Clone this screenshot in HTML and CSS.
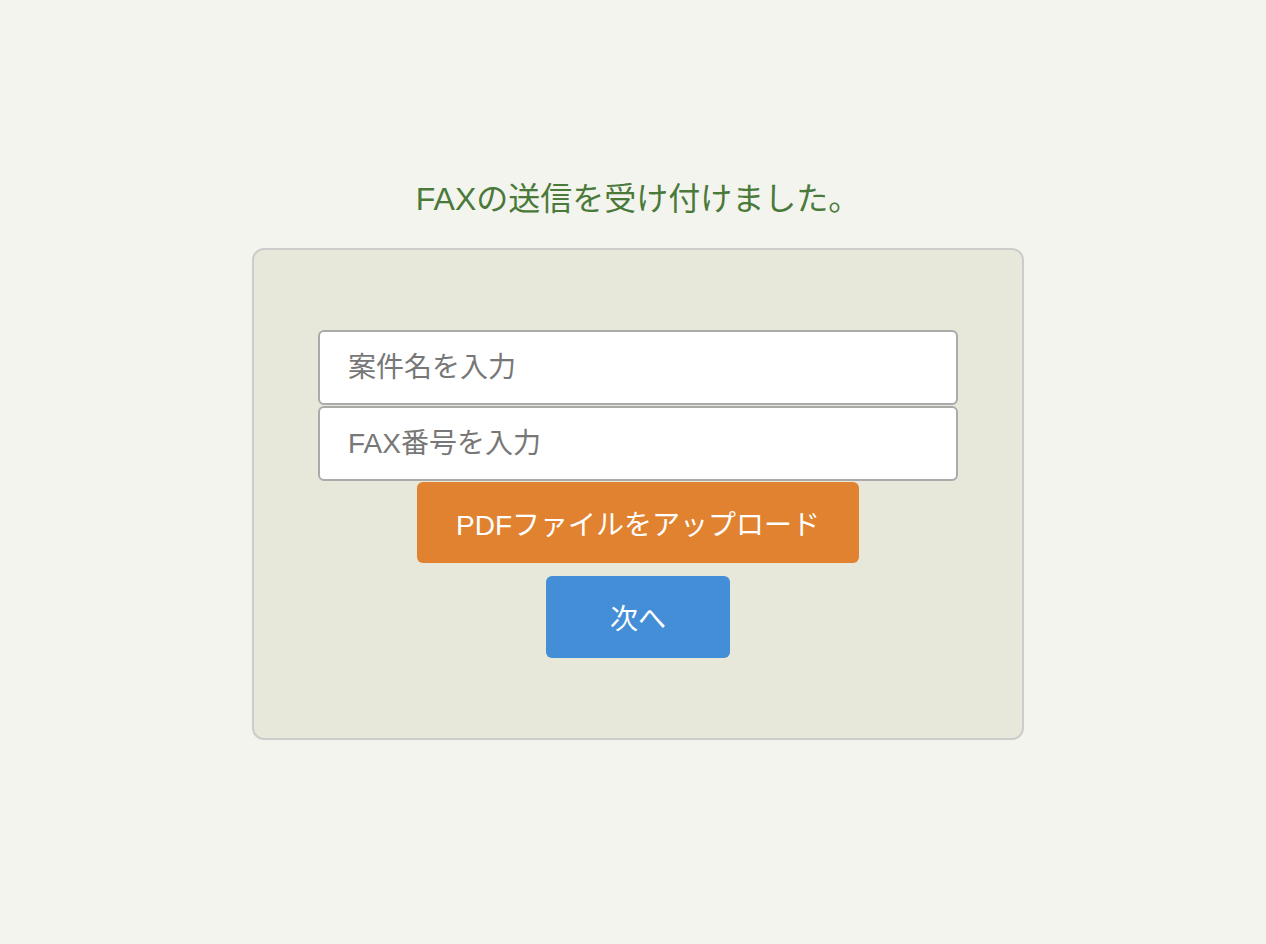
FILE: index.html
```html
<!DOCTYPE html>
<html lang="ja">
<head>
<meta charset="utf-8">
<title>FAX送信</title>
<link rel="stylesheet" href="styles.css">
</head>
<body>
<main class="page">
  <h1 class="title">FAXの送信を受け付けました。</h1>
  <form class="card">
    <div class="fields">
      <input class="field" type="text" placeholder="案件名を入力">
      <input class="field" type="text" placeholder="FAX番号を入力">
    </div>
    <button type="button" class="btn btn-upload">PDFファイルをアップロード</button>
    <button type="button" class="btn btn-next">次へ</button>
  </form>
</main>
</body>
</html>
```

FILE: styles.css
```css
html, body {
  margin: 0;
  padding: 0;
  background: #f4f4ee;
}
body {
  font-family: "Liberation Sans", "Noto Sans CJK JP", sans-serif;
  color: #333;
}
.page {
  display: flex;
  flex-direction: column;
  align-items: center;
  padding-top: 176px;
  padding-left: 10px;
}
.title {
  margin: 0 0 26px;
  font-size: 32px;
  font-weight: 400;
  line-height: 46px;
  color: #4a7a3a;
  letter-spacing: 0;
}
.card {
  box-sizing: border-box;
  width: 772px;
  height: 492px;
  background: #e7e7da;
  border: 2px solid #cccccc;
  border-radius: 12px;
  padding: 80px 63px;
  display: flex;
  flex-direction: column;
  align-items: center;
}
.fields {
  display: flex;
  flex-direction: column;
  gap: 1px;
  width: 640px;
}
.field {
  box-sizing: border-box;
  width: 640px;
  height: 75px;
  margin: 0;
  padding: 0 28px;
  border: 2px solid #aaaaaa;
  border-radius: 6px;
  background: #ffffff;
  font-family: inherit;
  font-size: 28px;
  color: #333;
  outline: none;
}
.field::placeholder {
  color: #777777;
}
.btn {
  box-sizing: border-box;
  border: none;
  border-radius: 6px;
  color: #ffffff;
  font-family: inherit;
  font-size: 28px;
  height: 81px;
  cursor: pointer;
}
.btn-upload {
  width: 442px;
  margin-top: 1px;
  background: #e0822f;
}
.btn-next {
  width: 184px;
  height: 82px;
  margin-top: 13px;
  background: #448ed8;
}
```
